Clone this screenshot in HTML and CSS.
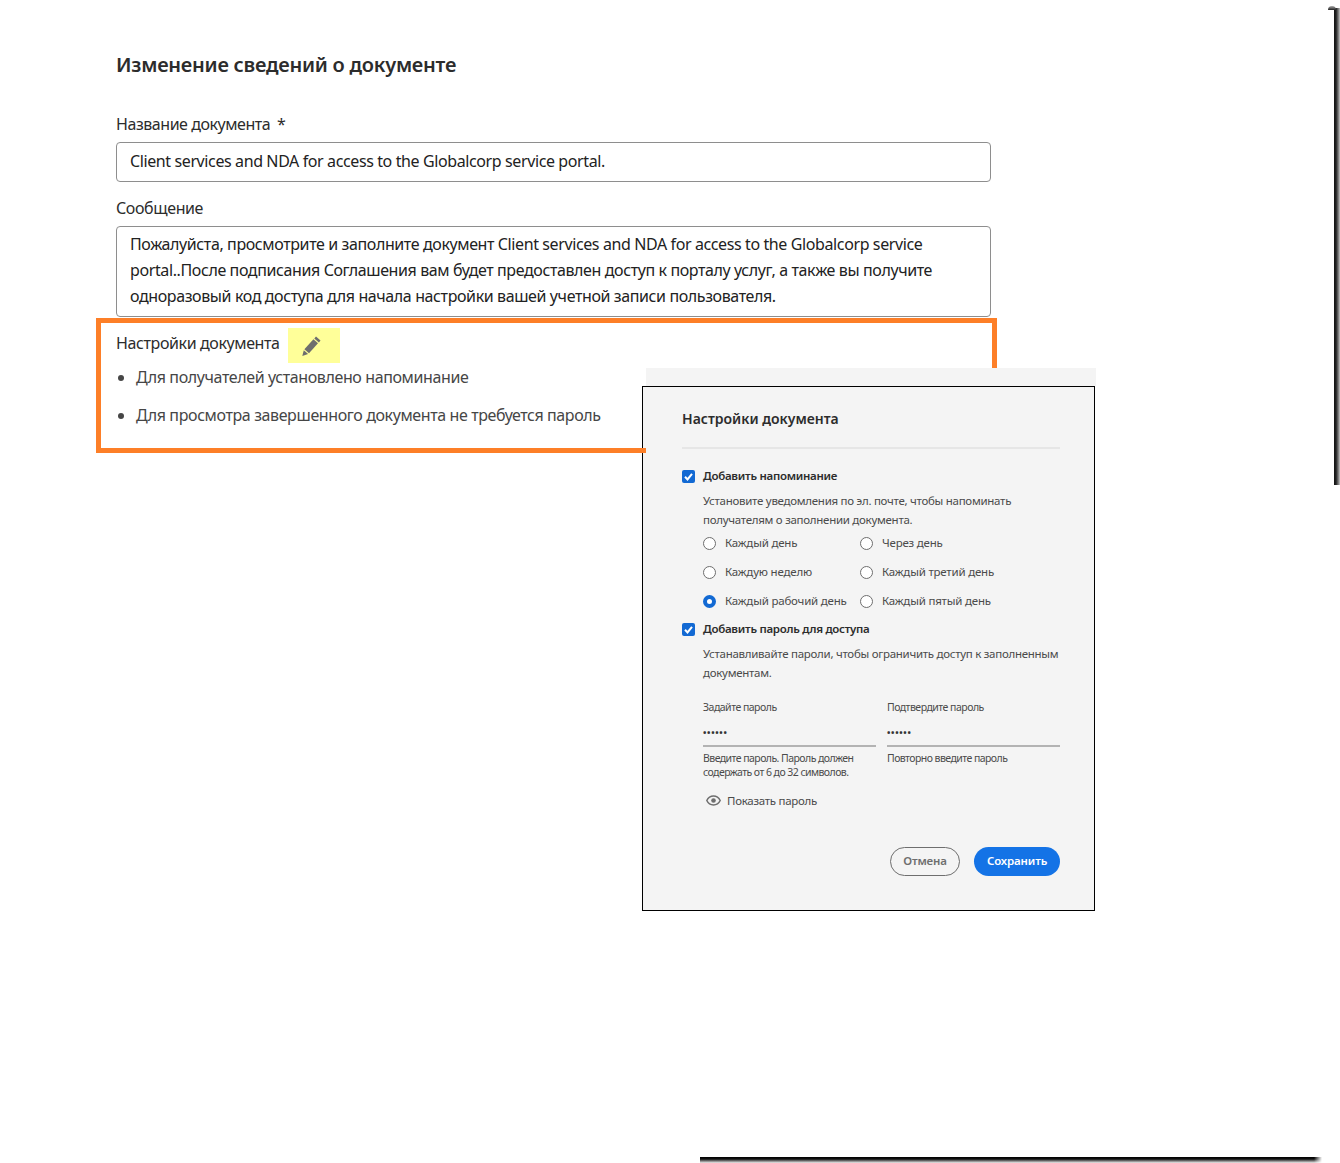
FILE: index.html
```html
<!DOCTYPE html>
<html lang="ru">
<head>
    <meta charset="UTF-8">
    <title>Изменение сведений о документе</title>
    <link rel="stylesheet" href="styles.css">
</head>
<body>
    <!-- Main form -->
    <div class="form">
        <h1>Изменение сведений о документе</h1>

        <div class="field-label name-label">Название документа <span class="star">*</span></div>
        <div class="input">Client services and NDA for access to the Globalcorp service portal.</div>

        <div class="field-label message-label">Сообщение</div>
        <div class="input message">Пожалуйста, просмотрите и заполните документ Client services and NDA for access to the Globalcorp service portal..После подписания Соглашения вам будет предоставлен доступ к порталу услуг, а также вы получите одноразовый код доступа для начала настройки вашей учетной записи пользователя.</div>

        <div class="settings">
            <div class="settings-head">
                <span class="settings-title">Настройки документа</span>
                <span class="edit-mark">
                    <svg width="22" height="22" viewBox="0 0 22 22">
                        <path d="M16 1.500l4.500 4-1.600 1.900-4.600-4z" fill="#6e6e6e"/>
                        <path d="M13.400 4.300l4.600 4L9 18.300l-4.600-4z" fill="#6e6e6e"/>
                        <path d="M3.800 15.200l4.300 3.800-5.800 2z" fill="#6e6e6e"/>
                    </svg>
                </span>
            </div>
            <ul>
                <li>Для получателей установлено напоминание</li>
                <li>Для просмотра завершенного документа не требуется пароль</li>
            </ul>
        </div>
    </div>

    <!-- Settings dialog -->
    <div class="dialog-top"></div>
    <div class="dialog">
        <h2>Настройки документа</h2>
        <hr>

        <div class="check-row">
            <span class="checkbox"><svg width="13" height="13" viewBox="0 0 13 13"><path d="M3 6.800l2.500 2.600L10 3.800" fill="none" stroke="#fff" stroke-width="2"/></svg></span>
            <b>Добавить напоминание</b>
        </div>
        <p class="hint">Установите уведомления по эл. почте, чтобы напоминать получателям о заполнении документа.</p>

        <div class="radios">
            <label><i class="radio"></i>Каждый день</label>
            <label><i class="radio"></i>Через день</label>
            <label><i class="radio"></i>Каждую неделю</label>
            <label><i class="radio"></i>Каждый третий день</label>
            <label><i class="radio on"></i>Каждый рабочий день</label>
            <label><i class="radio"></i>Каждый пятый день</label>
        </div>

        <div class="check-row second">
            <span class="checkbox"><svg width="13" height="13" viewBox="0 0 13 13"><path d="M3 6.800l2.500 2.600L10 3.800" fill="none" stroke="#fff" stroke-width="2"/></svg></span>
            <b>Добавить пароль для доступа</b>
        </div>
        <p class="hint">Устанавливайте пароли, чтобы ограничить доступ к заполненным документам.</p>

        <div class="passwords">
            <div class="pass">
                <div class="pass-label">Задайте пароль</div>
                <div class="pass-value">••••••</div>
                <div class="pass-note">Введите пароль. Пароль должен содержать от 6 до 32 символов.</div>
            </div>
            <div class="pass">
                <div class="pass-label">Подтвердите пароль</div>
                <div class="pass-value">••••••</div>
                <div class="pass-note">Повторно введите пароль</div>
            </div>
        </div>

        <div class="show-pass">
            <svg width="15" height="11" viewBox="0 0 15 11">
                <path d="M7.500 1C4.500 1 2 3 .8 5.500 2 8 4.500 10 7.500 10s5.500-2 6.700-4.500C13 3 10.500 1 7.500 1z" fill="none" stroke="#6e6e6e" stroke-width="1.500"/>
                <circle cx="7.500" cy="5.500" r="2.300" fill="#6e6e6e"/>
            </svg>
            <span>Показать пароль</span>
        </div>

        <div class="buttons">
            <button class="cancel">Отмена</button>
            <button class="save">Сохранить</button>
        </div>
    </div>

    <!-- Torn page shadow -->
    <div class="edge-right"></div>
    <div class="edge-bottom"></div>
</body>
</html>
```

FILE: styles.css
```css
/* General Styling */
html, body {
    height: 1163px;
}

body {
    font-family: 'Noto Sans', sans-serif;
    margin: 0;
    background: #fff;
    color: #2c2c2c;
    overflow: hidden;
    position: relative;
}

/* Main Form */
.form {
    width: 875px;
    margin-left: 116px;
    padding-top: 51px;
    letter-spacing: -.39px;
}

h1 {
    font-size: 20px;
    line-height: 28px;
    font-weight: 600;
    letter-spacing: -.25px;
    margin: 0;
}

.field-label {
    font-size: 16px;
    line-height: 22px;
}

.name-label {
    margin-top: 34px;
    letter-spacing: -.45px;
}

.message-label {
    margin-top: 15px;
}

.star {
    margin-left: 3px;
}

.input {
    box-sizing: border-box;
    margin-top: 7px;
    padding: 5px 14px 6px 13px;
    border: 1px solid #8e8e8e;
    border-radius: 4px;
    font-size: 16px;
    line-height: 26px;
    height: 40px;
    color: #222;
}

.message {
    height: 91px;
    padding-top: 4px;
    padding-right: 40px;
}

/* Orange highlighted block */
.settings {
    box-sizing: border-box;
    width: 901px;
    height: 135px;
    margin: 1px 0 0 -20px;
    padding: 5px 0 0 15px;
    border: 5px solid #fd7f28;
}

.settings-head {
    display: flex;
    align-items: center;
    gap: 8px;
    font-size: 16px;
}

.settings-title {
    margin-bottom: 5px;
}

.edit-mark {
    display: flex;
    align-items: center;
    justify-content: center;
    width: 52px;
    height: 35px;
    background: #ffff99;
}

.edit-mark svg {
    margin-right: 6px;
}

.settings ul {
    list-style: none;
    margin: 0;
    padding: 0;
}

.settings li {
    position: relative;
    padding-left: 20px;
    margin-top: 12px;
    font-size: 16px;
    line-height: 26px;
    color: #464646;
}

.settings li:first-child {
    margin-top: 1px;
}

.settings li::before {
    content: "";
    position: absolute;
    left: 2px;
    top: 11px;
    width: 6px;
    height: 6px;
    border-radius: 50%;
    background: #464646;
}

/* Settings Dialog */
.dialog-top {
    position: absolute;
    left: 646px;
    top: 368px;
    width: 450px;
    height: 18px;
    background: #f4f4f4;
}

.dialog {
    position: absolute;
    left: 642px;
    top: 386px;
    box-sizing: border-box;
    width: 453px;
    height: 525px;
    padding: 22px 34px 0 39px;
    background: #f4f4f4;
    border: 1px solid #000;
    color: #4b4b4b;
    font-size: 11.500px;
    letter-spacing: -.28px;
}

/* orange frame runs over the dialog's left border */
.dialog::before {
    content: "";
    position: absolute;
    left: -1px;
    top: 61px;
    width: 4px;
    height: 5px;
    background: #fd7f28;
}

h2 {
    font-size: 14px;
    line-height: 20px;
    font-weight: 600;
    letter-spacing: 0;
    margin: 0;
    color: #2c2c2c;
}

hr {
    border: 0;
    height: 2px;
    background: #e6e6e6;
    margin: 18px 0 16px;
}

.check-row {
    display: flex;
    align-items: center;
    gap: 8px;
    height: 20px;
}

.check-row .checkbox {
    margin-top: 3px;
}

.check-row b {
    font-weight: 600;
    color: #2c2c2c;
}

.check-row.second {
    margin-top: 3px;
}

.checkbox {
    display: flex;
    align-items: center;
    justify-content: center;
    width: 13px;
    height: 13px;
    background: #1269d3;
    border-radius: 2px;
}

.hint {
    margin: 6px -4px 0 21px;
    line-height: 19px;
}

.radios {
    display: grid;
    grid-template-columns: 157px 1fr;
    grid-auto-rows: 29px;
    margin: -1px 0 0 21px;
    letter-spacing: -.2px;
}

.radios label {
    display: flex;
    align-items: center;
    gap: 9px;
}

.radio {
    box-sizing: border-box;
    width: 13px;
    height: 13px;
    margin-top: 2px;
    border: 1px solid #6e6e6e;
    border-radius: 50%;
    background: #fff;
}

.radio.on {
    border: 4px solid #1269d3;
}

.passwords {
    display: grid;
    grid-template-columns: 173px 173px;
    gap: 11px;
    margin: 17px 0 0 21px;
}

.pass-label {
    font-size: 10.500px;
    line-height: 16px;
    letter-spacing: -.5px;
}

.pass-value {
    height: 26px;
    line-height: 28px;
    font-size: 9px;
    font-weight: 700;
    letter-spacing: .7px;
    margin-top: 4px;
    color: #333;
    border-bottom: 2px solid #b3b3b3;
}

.pass-note {
    font-size: 10.500px;
    line-height: 14px;
    letter-spacing: -.55px;
    margin-top: 4px;
}

.show-pass {
    display: flex;
    align-items: center;
    gap: 6px;
    margin: 14px 0 0 24px;
}

.buttons {
    display: flex;
    justify-content: flex-end;
    gap: 14px;
    margin-top: 39px;
}

.buttons button {
    box-sizing: border-box;
    height: 29px;
    border-radius: 15px;
    font-family: inherit;
    font-size: 11.500px;
    font-weight: 600;
    letter-spacing: -.15px;
    padding: 0 0 3px;
}

.cancel {
    width: 70px;
    background: transparent;
    border: 1px solid #6e6e6e;
    color: #6e6e6e;
}

.save {
    width: 86px;
    background: #1473e6;
    border: 0;
    color: #fff;
}

/* Page edge shadows */
.edge-right {
    position: absolute;
    left: 1334px;
    top: 8px;
    width: 6px;
    height: 477px;
    background: linear-gradient(90deg, #111, #222 35%, #999 85%, #ccc);
}

.edge-right::before {
    content: "";
    position: absolute;
    left: -6px;
    top: -2px;
    width: 8px;
    height: 4px;
    border-radius: 4px 4px 0 0;
    background: linear-gradient(180deg, #aaa, #222);
}

.edge-bottom {
    position: absolute;
    left: 700px;
    top: 1157px;
    width: 622px;
    height: 6px;
    background: linear-gradient(90deg, transparent calc(100% - 8px), #fff), linear-gradient(180deg, #000, #111 35%, #999 75%, #eee);
}
```
